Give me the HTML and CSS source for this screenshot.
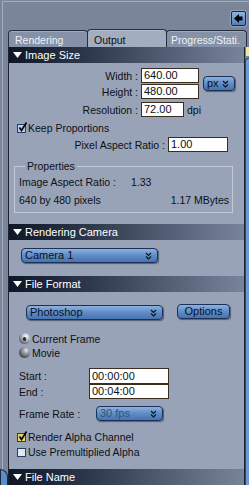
FILE: index.html
```html
<!DOCTYPE html>
<html>
<head>
<meta charset="utf-8">
<link rel="stylesheet" href="styles.css">
</head>
<body>
<div class="frame">
  <div class="topbar">
    <div class="collapse-btn">
      <svg width="13" height="13" viewBox="0 0 13 13"><polygon points="2,6.5 7,2 7,4.5 10.5,4.5 10.5,8.5 7,8.5 7,11" fill="#000"/></svg>
    </div>
  </div>
  <div class="tabs">
    <div class="tab">Rendering</div>
    <div class="tab active">Output</div>
    <div class="tab last">Progress/Stati.</div>
  </div>
  <div class="main">
    <div class="gutter"><div class="blob"></div></div>
    <div class="panel">
      <div class="head"><svg class="tri" width="9" height="6" viewBox="0 0 9 6"><polygon points="0,0 9,0 4.5,6" fill="#fff"/></svg><span>Image Size</span></div>
      <div class="section sec-size">
        <div class="size-block">
          <div class="size-rows">
            <div class="row"><span class="lbl w-main">Width :</span><div class="field f-dim">640.00</div></div>
            <div class="row r-gap1"><span class="lbl w-main">Height :</span><div class="field f-dim">480.00</div></div>
          </div>
          <div class="select s-px"><span>px</span><svg class="chev" width="7" height="8" viewBox="0 0 7 8"><polyline points="1,1 3.5,3.5 6,1" fill="none" stroke="#111" stroke-width="1.1"/><polyline points="1,4.5 3.5,7 6,4.5" fill="none" stroke="#111" stroke-width="1.1"/></svg></div>
        </div>
        <div class="row r-res"><span class="lbl w-main">Resolution :</span><div class="field f-res">72.00</div><span class="unit">dpi</span></div>
        <div class="check-row r-keep"><span class="cb checked"><svg width="12" height="11" viewBox="0 0 12 11"><path d="M2.5 5.5 L4.5 8.5 L9.5 0.5" fill="none" stroke="#000" stroke-width="1.6"/></svg></span><span>Keep Proportions</span></div>
        <div class="row r-par"><span class="lbl w-par">Pixel Aspect Ratio :</span><div class="field f-par">1.00</div></div>
        <fieldset class="props">
          <legend>Properties</legend>
          <div class="prow p1"><span class="p-lbl">Image Aspect Ratio :</span><span>1.33</span></div>
          <div class="prow p2"><span>640 by 480 pixels</span><span>1.17 MBytes</span></div>
        </fieldset>
      </div>
      <div class="head"><svg class="tri" width="9" height="6" viewBox="0 0 9 6"><polygon points="0,0 9,0 4.5,6" fill="#fff"/></svg><span>Rendering Camera</span></div>
      <div class="section sec-cam">
        <div class="select s-cam"><span>Camera 1</span><svg class="chev" width="7" height="8" viewBox="0 0 7 8"><polyline points="1,1 3.5,3.5 6,1" fill="none" stroke="#111" stroke-width="1.1"/><polyline points="1,4.5 3.5,7 6,4.5" fill="none" stroke="#111" stroke-width="1.1"/></svg></div>
      </div>
      <div class="head"><svg class="tri" width="9" height="6" viewBox="0 0 9 6"><polygon points="0,0 9,0 4.5,6" fill="#fff"/></svg><span>File Format</span></div>
      <div class="section sec-fmt">
        <div class="fmt-row">
          <div class="select s-fmt"><span>Photoshop</span><svg class="chev" width="7" height="8" viewBox="0 0 7 8"><polyline points="1,1 3.5,3.5 6,1" fill="none" stroke="#111" stroke-width="1.1"/><polyline points="1,4.5 3.5,7 6,4.5" fill="none" stroke="#111" stroke-width="1.1"/></svg></div>
          <div class="button">Options</div>
        </div>
        <div class="radio-row r-cur"><span class="radio on"></span><span>Current Frame</span></div>
        <div class="radio-row r-mov"><span class="radio"></span><span>Movie</span></div>
        <div class="row r-start"><span class="lbl w-time">Start :</span><div class="field f-time">00:00:00</div></div>
        <div class="row r-end"><span class="lbl w-time">End :</span><div class="field f-time f-end">00:04:00</div></div>
        <div class="row r-rate"><span class="lbl w-rate">Frame Rate :</span><div class="select s-rate disabled"><span>30 fps</span><svg class="chev" width="7" height="8" viewBox="0 0 7 8"><polyline points="1,1 3.5,3.5 6,1" fill="none" stroke="#111" stroke-width="1.1"/><polyline points="1,4.5 3.5,7 6,4.5" fill="none" stroke="#111" stroke-width="1.1"/></svg></div></div>
        <div class="check-row r-alpha"><span class="cb checked yellow"><svg width="12" height="11" viewBox="0 0 12 11"><path d="M2.5 5.5 L4.5 8.5 L9.5 0.5" fill="none" stroke="#000" stroke-width="1.6"/></svg></span><span>Render Alpha Channel</span></div>
        <div class="check-row r-pre"><span class="cb"></span><span>Use Premultiplied Alpha</span></div>
      </div>
      <div class="head"><svg class="tri" width="9" height="6" viewBox="0 0 9 6"><polygon points="0,0 9,0 4.5,6" fill="#fff"/></svg><span>File Name</span></div>
    </div>
    <div class="scroll"><div class="yel"></div><div class="sgap"></div><div class="thumb"></div></div>
  </div>
</div>
</body>
</html>
```
FILE: styles.css
```css
* { box-sizing: border-box; }
html, body { margin: 0; padding: 0; }
body {
  width: 249px;
  height: 485px;
  overflow: hidden;
  background: #7a8599;
  font-family: "Liberation Sans", Arial, sans-serif;
  font-size: 10.5px;
  color: #0c1016;
  padding: 1px 0 0 2px;
}
.frame {
  height: 484px;
  border-top: 1px solid #a6afc0;
  border-left: 1px solid #a6afc0;
  display: flex;
  flex-direction: column;
}
.topbar {
  height: 27px;
  flex: none;
  display: flex;
  justify-content: flex-end;
  align-items: flex-start;
  padding: 9px 3px 0 0;
}
.collapse-btn {
  width: 15px;
  height: 15px;
  border: 1px solid #1a2740;
  border-radius: 2px;
  background: linear-gradient(#8fb3e2, #4f7fbf);
  display: flex;
  align-items: center;
  justify-content: center;
  box-shadow: 0 0 0 1px rgba(200,210,225,.35);
}
.tabs {
  height: 18px;
  flex: none;
  margin-left: 5px;
  display: flex;
  align-items: flex-end;
}
.tab {
  width: 80px;
  height: 17px;
  flex: none;
  border: 1px solid #262f3e;
  border-bottom: none;
  border-radius: 4px 4px 0 0;
  background: #8591a6;
  color: #eef1f6;
  padding: 2px 0 0 6px;
  line-height: 14px;
  white-space: nowrap;
  box-shadow: inset 0 1px 0 rgba(210,218,230,.35);
}
.tab + .tab { margin-left: -1px; }
.tab.active {
  height: 18px;
  background: #a3adc0;
  color: #0c1016;
  padding-top: 3px;
  z-index: 1;
}
.tab.last { width: 81px; padding-left: 4px; }
.main {
  flex: 1;
  display: flex;
  min-height: 0;
}
.gutter {
  width: 5px;
  display: flex;
  flex-direction: column;
  justify-content: flex-end;
}
.blob {
  height: 20px;
  margin-left: -3px;
  margin-bottom: -4px;
  background: #5f8cc6;
  border: 1px solid #1b2945;
  border-radius: 0 8px 0 0;
}
.panel {
  width: 237px;
  flex: none;
  border-left: 1px solid #1b2331;
  border-right: 1px solid #1b2331;
  background: #99a3b7;
  display: flex;
  flex-direction: column;
}
.scroll {
  width: 4px;
  display: flex;
  flex-direction: column;
}
.yel { height: 9px; margin-left: 1px; background: #efe7a8; }
.sgap { height: 2px; }
.thumb {
  flex: 1;
  background: #6e9ad2;
  border-left: 1px solid #2b4670;
  border-top: 1px solid #2b4670;
  border-radius: 3px 0 0 0;
}
.head {
  height: 16px;
  flex: none;
  display: flex;
  align-items: center;
  gap: 3px;
  padding-left: 4px;
  background: linear-gradient(90deg, #0e1627 0%, #2e394d 35%, #78849a 100%);
  color: #fff;
  font-size: 11px;
}
.tri { flex: none; }
.section { flex: none; overflow: hidden; }
.sec-size { height: 161px; }
.sec-cam { height: 36px; }
.sec-fmt { height: 177px; }

.row { display: flex; align-items: center; }
.lbl { text-align: right; padding-right: 3px; flex: none; }
.w-main { width: 132px; }
.w-par { width: 159px; }
.field {
  height: 15px;
  background: #fff;
  border: 1px solid #3a2e20;
  padding-left: 2px;
  line-height: 13px;
  font-size: 11px;
}
.size-block {
  margin-top: 5px;
  display: flex;
  align-items: center;
}
.size-rows { display: flex; flex-direction: column; }
.r-gap1 { margin-top: 1px; }
.f-dim { width: 58px; }
.s-px { width: 32px; height: 18px; margin-left: 4px; }
.r-res { margin-top: 3px; }
.f-res { width: 43px; }
.unit { margin-left: 3px; }
.check-row {
  display: flex;
  align-items: center;
  height: 14px;
  padding-left: 8px;
}
.r-keep { margin-top: 4px; }
.cb {
  width: 9px;
  height: 9px;
  border: 1px solid #233d66;
  background: #e3e7ee;
  margin-right: 2px;
  position: relative;
  flex: none;
}
.cb.checked { background: #b8cbe6; }
.cb.yellow { background: #e6d36a; }
.cb svg { position: absolute; left: -1px; top: -3px; }
.r-par { margin-top: 2px; }
.f-par { width: 60px; }
.props {
  margin: 8px 0 0 5px;
  width: 219px;
  border: 1px solid #c3cad7;
  padding: 0 3px 5px 4px;
  min-width: 0;
}
.props legend {
  padding: 0 2px;
  margin-left: 6px;
  line-height: 13px;
}
.prow { display: flex; height: 13px; line-height: 13px; }
.p1 { margin-top: 3px; }
.p2 { margin-top: 5px; justify-content: space-between; }
.p-lbl { width: 112px; }

.select {
  height: 15px;
  border: 1px solid #1c3155;
  border-radius: 4px;
  background: linear-gradient(#8cb1e0, #5f8cc6 50%, #4774b1);
  box-shadow: 1px 1px 1px rgba(15,25,45,.5);
  display: flex;
  align-items: center;
  justify-content: space-between;
  padding: 0 5px 0 3px;
  line-height: 13px;
  font-size: 11px;
}
.chev { flex: none; }
.s-cam { width: 137px; margin: 8px 0 0 12px; }
.fmt-row {
  margin-top: 12px;
  display: flex;
  align-items: flex-start;
}
.s-fmt { width: 137px; margin: 1px 0 0 17px; }
.button {
  width: 53px;
  height: 15px;
  margin-left: 14px;
  border: 1px solid #1c3155;
  border-radius: 4px;
  background: linear-gradient(#8cb1e0, #5f8cc6 50%, #4774b1);
  box-shadow: 1px 1px 1px rgba(15,25,45,.5);
  text-align: center;
  line-height: 13px;
  font-size: 11px;
}
.radio-row {
  display: flex;
  align-items: center;
  height: 13px;
  padding-left: 10px;
}
.r-cur { margin-top: 12px; }
.r-mov { margin-top: 1px; }
.radio {
  width: 11px;
  height: 11px;
  border-radius: 50%;
  margin-right: 2px;
  flex: none;
  background: radial-gradient(circle at 65% 30%, #e8eaee 0, #a4a8ae 25%, #4a5058 70%, #262a30 100%);
}
.radio.on {
  background: radial-gradient(circle at 50% 55%, #2a2e34 0, #2a2e34 18%, transparent 26%),
              radial-gradient(circle at 65% 30%, #f6f7f9 0, #c4c8cd 30%, #6a7078 70%, #30343a 100%);
}
.r-start { margin-top: 9px; }
.w-time { width: 80px; text-align: left; padding-left: 10px; }
.f-time { width: 80px; height: 16px; line-height: 14px; }
.f-end { height: 15px; line-height: 13px; }
.r-rate { margin-top: 7px; }
.w-rate { width: 87px; text-align: left; padding-left: 10px; }
.s-rate { width: 67px; }
.disabled span { color: #33527f; }
.r-alpha { margin-top: 9px; }
.r-pre { margin-top: 1px; }
```
